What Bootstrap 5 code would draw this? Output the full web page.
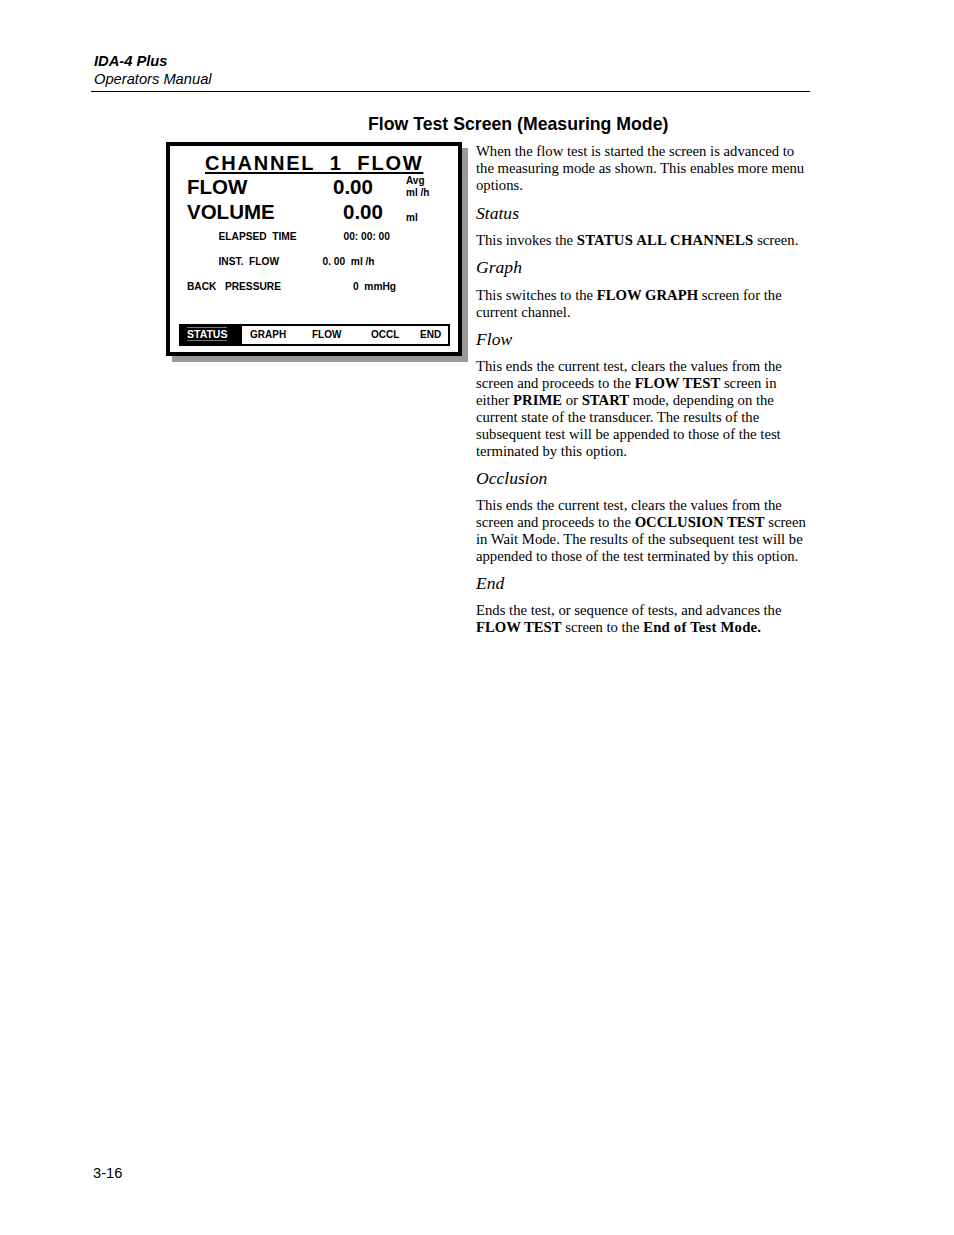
<!DOCTYPE html>
<html lang="en">
<head>
<meta charset="utf-8">
<title>IDA-4 Plus</title>
<link href="https://cdn.jsdelivr.net/npm/bootstrap@5.3.0/dist/css/bootstrap.min.css" rel="stylesheet">
<style>
html,body{background:#fff;color:#000;margin:0}
.sheet{width:954px;height:1235px;padding:52px 144px 53px 91px;font-family:"Liberation Sans",Arial,sans-serif}
.runhead{border-bottom:1px solid #000;padding:0 0 3px 3px;font-size:14.7px;line-height:18px;height:40px}
.runhead b{font-style:italic}
.runhead i{display:block}
.secttl{font-size:17.7px;font-weight:700;line-height:20px;margin:22px 0 0 277px;height:20px}
.lay{margin-top:8px}
.leftcol{width:385px;padding-left:75px;flex:none}
.rightcol{width:334px;flex:none;padding-top:1px;font-family:"Liberation Serif","Times New Roman",serif;font-size:14.7px;line-height:17px}
.rightcol p{margin:0}
.rightcol h3{font-size:17.6px;font-style:italic;font-weight:400;line-height:20px;margin:8px 0 9px}
.rightcol h3.hd-status{margin:9px 0}
.rightcol h3.hd-graph{margin:8px 0 10px}
.widebold{letter-spacing:.22px}
.lcd{width:296px;height:214px;border:4px solid #000;box-shadow:6px 6px 0 #999;background:#fff;padding:0 8px 0 17px;font-weight:700;line-height:1}
.lcdttl{font-size:20px;letter-spacing:1.8px;text-decoration:underline;text-decoration-thickness:2px;text-underline-offset:2px;margin:5px 0 0 18px;height:23px;white-space:pre;line-height:24px}
.bigrow{font-size:20.5px;height:25px;line-height:25px;white-space:pre}
.bigrow .lbl{width:146px;flex:none}
.bigrow .val{width:73px;flex:none}
.bigrow2 .lbl{width:156px}
.bigrow2 .val{width:63px}
.bigrow .un{font-size:10px;line-height:12px;padding-top:1px}
.bigrow2 .un{padding-top:13px}
.minirow{font-size:10.2px;line-height:12px;white-space:pre;height:25px}
.mr1{margin-top:7px;padding-left:31.5px}
.mr1 .lb{width:125px}
.mr2{padding-left:31.5px}
.mr2 .lb{width:104px}
.mr3 .lb{width:166px}
.menubar{border:2px solid #000;margin:18px 0 0 -8px;width:271px;height:22px;font-size:10px;line-height:18px}
.menubar span{white-space:nowrap}
.menusel{background:#000;color:#fff;width:61px;padding-left:6px;flex:none}
.menusel u{text-decoration:none;font-size:10.5px;border-top:1px solid #777;border-bottom:1px solid #777;display:inline-block;line-height:12px}
.m1{margin-left:8px;width:62px}.m2{width:59px}.m3{width:49px}.m4{width:auto}
.folio{margin:auto 0 0 2px;font-size:14.7px;line-height:18px}
</style>
</head>
<body>
<div class="sheet d-flex flex-column">
  <div class="runhead"><b>IDA-4 Plus</b><i>Operators Manual</i></div>
  <div class="secttl">Flow Test Screen (Measuring Mode)</div>
  <div class="lay d-flex">
    <div class="leftcol">
      <div class="lcd">
        <div class="lcdttl">CHANNEL  1  FLOW</div>
        <div class="bigrow d-flex"><span class="lbl">FLOW</span><span class="val">0.00</span><span class="un">Avg<br>ml /h</span></div>
        <div class="bigrow bigrow2 d-flex"><span class="lbl">VOLUME</span><span class="val">0.00</span><span class="un">ml</span></div>
        <div class="minirow mr1 d-flex"><span class="lb">ELAPSED  TIME</span><span>00: 00: 00</span></div>
        <div class="minirow mr2 d-flex"><span class="lb">INST.  FLOW</span><span>0. 00  ml /h</span></div>
        <div class="minirow mr3 d-flex"><span class="lb">BACK   PRESSURE</span><span>0  mmHg</span></div>
        <div class="menubar d-flex">
          <span class="menusel"><u>STATUS</u></span>
          <span class="m1">GRAPH</span><span class="m2">FLOW</span><span class="m3">OCCL</span><span class="m4">END</span>
        </div>
      </div>
    </div>
    <div class="rightcol">
      <p>When the flow test is started the screen is advanced to the measuring mode as shown. This enables more menu options.</p>
      <h3 class="hd-status">Status</h3>
      <p>This invokes the <b class="widebold">STATUS ALL CHANNELS</b> screen.</p>
      <h3 class="hd-graph">Graph</h3>
      <p>This switches to the <b>FLOW GRAPH</b> screen for the current channel.</p>
      <h3>Flow</h3>
      <p>This ends the current test, clears the values from the screen and proceeds to the <b>FLOW TEST</b> screen in either <b>PRIME</b> or <b>START</b> mode, depending on the current state of the transducer. The results of the subsequent test will be appended to those of the test terminated by this option.</p>
      <h3>Occlusion</h3>
      <p>This ends the current test, clears the values from the screen and proceeds to the <b>OCCLUSION TEST</b> screen in Wait Mode. The results of the subsequent test will be appended to those of the test terminated by this option.</p>
      <h3>End</h3>
      <p>Ends the test, or sequence of tests, and advances the <b>FLOW TEST</b> screen to the <b class="widebold">End of Test Mode.</b></p>
    </div>
  </div>
  <div class="folio">3-16</div>
</div>
<script src="https://cdn.jsdelivr.net/npm/bootstrap@5.3.0/dist/js/bootstrap.bundle.min.js"></script>
</body>
</html>
